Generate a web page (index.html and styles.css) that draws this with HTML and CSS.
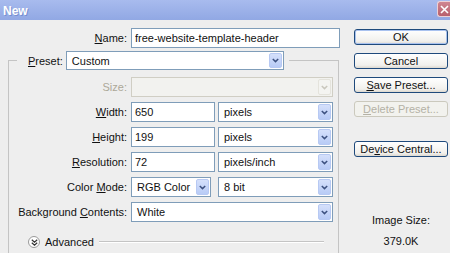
FILE: index.html
```html
<!DOCTYPE html>
<html lang="en">
<head>
    <meta charset="UTF-8">
    <title>New</title>
    <link rel="stylesheet" href="styles.css">
</head>
<body>
    <div class="titlebar">
        <span class="title">New</span>
        <span class="close">
            <svg width="9" height="9" viewBox="0 0 9 9"><path d="M1 1 L8 8 M8 1 L1 8" stroke="#fff" stroke-width="1.6"/></svg>
        </span>
    </div>

    <div class="dialog">
        <div class="main">
            <div class="name-row">
                <label class="lbl"><u>N</u>ame:</label>
                <input class="input name" type="text" value="free-website-template-header">
            </div>

            <fieldset class="group">
                <legend>
                    <label class="legend-lbl"><u>P</u>reset:</label>
                    <div class="select preset">Custom<span class="arrow"><svg width="7" height="5" viewBox="0 0 7 5"><path d="M0.8 1 L3.5 3.6 L6.2 1" fill="none" stroke="#3d5180" stroke-width="1.5"/></svg></span></div>
                </legend>

                <div class="row first">
                    <label class="lbl off">Size:</label>
                    <div class="select full disabled"><span class="arrow"><svg width="7" height="5" viewBox="0 0 7 5"><path d="M0.8 1 L3.5 3.6 L6.2 1" fill="none" stroke="#c9c7bd" stroke-width="1.5"/></svg></span></div>
                </div>
                <div class="row">
                    <label class="lbl"><u>W</u>idth:</label>
                    <input class="input num" type="text" value="650">
                    <div class="select units">pixels<span class="arrow"><svg width="7" height="5" viewBox="0 0 7 5"><path d="M0.8 1 L3.5 3.6 L6.2 1" fill="none" stroke="#3d5180" stroke-width="1.5"/></svg></span></div>
                </div>
                <div class="row">
                    <label class="lbl"><u>H</u>eight:</label>
                    <input class="input num" type="text" value="199">
                    <div class="select units">pixels<span class="arrow"><svg width="7" height="5" viewBox="0 0 7 5"><path d="M0.8 1 L3.5 3.6 L6.2 1" fill="none" stroke="#3d5180" stroke-width="1.5"/></svg></span></div>
                </div>
                <div class="row">
                    <label class="lbl"><u>R</u>esolution:</label>
                    <input class="input num" type="text" value="72">
                    <div class="select units">pixels/inch<span class="arrow"><svg width="7" height="5" viewBox="0 0 7 5"><path d="M0.8 1 L3.5 3.6 L6.2 1" fill="none" stroke="#3d5180" stroke-width="1.5"/></svg></span></div>
                </div>
                <div class="row">
                    <label class="lbl">Color <u>M</u>ode:</label>
                    <div class="select mode">RGB Color<span class="arrow"><svg width="7" height="5" viewBox="0 0 7 5"><path d="M0.8 1 L3.5 3.6 L6.2 1" fill="none" stroke="#3d5180" stroke-width="1.5"/></svg></span></div>
                    <div class="select units bits">8 bit<span class="arrow"><svg width="7" height="5" viewBox="0 0 7 5"><path d="M0.8 1 L3.5 3.6 L6.2 1" fill="none" stroke="#3d5180" stroke-width="1.5"/></svg></span></div>
                </div>
                <div class="row">
                    <label class="lbl">Background <u>C</u>ontents:</label>
                    <div class="select full">White<span class="arrow"><svg width="7" height="5" viewBox="0 0 7 5"><path d="M0.8 1 L3.5 3.6 L6.2 1" fill="none" stroke="#3d5180" stroke-width="1.5"/></svg></span></div>
                </div>

                <div class="advanced">
                    <span class="toggle">
                        <svg width="7" height="7" viewBox="0 0 7 7"><path d="M0.8 0.8 L3.5 3.2 L6.2 0.8 M0.8 3.8 L3.5 6.2 L6.2 3.8" fill="none" stroke="#333" stroke-width="1.2"/></svg>
                    </span>
                    <span class="adv-text">Advanced</span>
                    <span class="rule"></span>
                </div>
            </fieldset>
        </div>

        <div class="side">
            <button class="btn default">OK</button>
            <button class="btn">Cancel</button>
            <button class="btn"><u>S</u>ave Preset...</button>
            <button class="btn disabled"><u>D</u>elete Preset...</button>
            <button class="btn device">De<u>v</u>ice Central...</button>
            <div class="image-size">
                <div>Image Size:</div>
                <div class="kb">379.0K</div>
            </div>
        </div>
    </div>
</body>
</html>
```

FILE: styles.css
```css
body {
    margin: 0;
    font-family: "Liberation Sans", Arial, sans-serif;
    font-size: 11px;
    color: #111;
    background-color: #eeeeee;
    overflow: hidden;
}
u {
    text-decoration: underline;
    text-underline-offset: 1px;
}
.titlebar {
    height: 20px;
    display: flex;
    justify-content: space-between;
    align-items: flex-start;
    background: linear-gradient(#a8bbee, #91a8e4);
}
.title {
    color: white;
    font-weight: bold;
    font-size: 12px;
    padding: 4px 0 0 3px;
    text-shadow: 1px 1px #7690d0;
}
.close {
    width: 13px;
    height: 16px;
    margin-top: 1px;
    box-sizing: border-box;
    background: linear-gradient(#cf8591, #b8606d);
    border: 1px solid #ecd0d5;
    border-right: 0;
    border-radius: 3px 0 0 3px;
    display: flex;
    align-items: center;
    justify-content: center;
}
.dialog {
    display: flex;
}
.main {
    width: 340px;
}
.name-row {
    display: flex;
    align-items: center;
    margin-top: 8px;
}
.lbl {
    width: 127px;
    text-align: right;
    margin-right: 4px;
    flex-shrink: 0;
}
.group .lbl {
    width: 118px;
}
.lbl.off {
    color: #aca899;
}
.input {
    height: 20px;
    box-sizing: border-box;
    border: 1px solid #7f9db9;
    background: white;
    padding: 0 3px;
    font: inherit;
    color: #111;
    outline: none;
}
.input.name {
    width: 210px;
}
.input.num {
    width: 84px;
    margin-right: 3px;
}
.select {
    height: 20px;
    box-sizing: border-box;
    border: 1px solid #7f9db9;
    background: white;
    padding-left: 5px;
    display: flex;
    align-items: center;
    flex-shrink: 0;
}
.select .arrow {
    align-self: stretch;
    width: 13px;
    margin: 1px 1px 1px auto;
    box-sizing: border-box;
    border: 1px solid #b7c9f3;
    border-radius: 2px;
    background: linear-gradient(#d5e0fb, #b8cbf6);
    display: flex;
    align-items: center;
    justify-content: center;
}
.select.disabled {
    border-color: #d0cec4;
    background: #f2f2ef;
}
.select.disabled .arrow {
    border-color: #e4e3dc;
    background: #f4f4f1;
}
.preset {
    width: 218px;
    height: 19px;
}
.full {
    width: 202px;
}
.units {
    width: 115px;
}
.mode {
    width: 80px;
    margin-right: 7px;
}
/* the group box runs on below the window edge, so no bottom border */
.group {
    margin: 3px 0 0 8px;
    padding: 0;
    width: 331px;
    height: 202px;
    box-sizing: border-box;
    border: 1px solid #c4c4c4;
    border-bottom: 0;
    min-width: 0;
}
.group legend {
    margin-left: 8px;
    padding: 0 5px 0 11px;
    display: flex;
    align-items: center;
}
.legend-lbl {
    margin-right: 3px;
}
.row {
    display: flex;
    align-items: center;
    height: 20px;
    margin-bottom: 5px;
}
.row.first {
    margin-top: 7px;
}
.advanced {
    display: flex;
    align-items: center;
    height: 14px;
    margin: 13px 14px 0 19px;
}
.toggle {
    width: 12px;
    height: 12px;
    box-sizing: border-box;
    border: 1px solid #9a9a9a;
    border-radius: 50%;
    background: white;
    display: flex;
    align-items: center;
    justify-content: center;
}
.adv-text {
    margin: 0 5px;
}
.rule {
    flex: 1;
    height: 1px;
    background: #c4c4c4;
    border-bottom: 1px solid white;
}
.side {
    margin-left: 14px;
    width: 94px;
    padding-top: 9px;
    display: flex;
    flex-direction: column;
}
.btn {
    height: 16px;
    box-sizing: border-box;
    border: 1px solid #1f4a7c;
    border-radius: 3px;
    background: linear-gradient(#ffffff, #f1f0ec 80%, #dcd8cf);
    font: inherit;
    color: #111;
    padding: 0;
    margin-bottom: 8px;
    line-height: 13px;
}
.btn.default {
    box-shadow: inset 0 0 0 1px #a9c2ef;
}
.btn.disabled {
    border-color: #cbc9bd;
    color: #b4b1a5;
    background: #f2f2ee;
}
.btn.device {
    margin-top: 16px;
}
.image-size {
    margin-top: 48px;
    text-align: center;
    line-height: 14px;
}
.kb {
    margin-top: 7px;
}
```
